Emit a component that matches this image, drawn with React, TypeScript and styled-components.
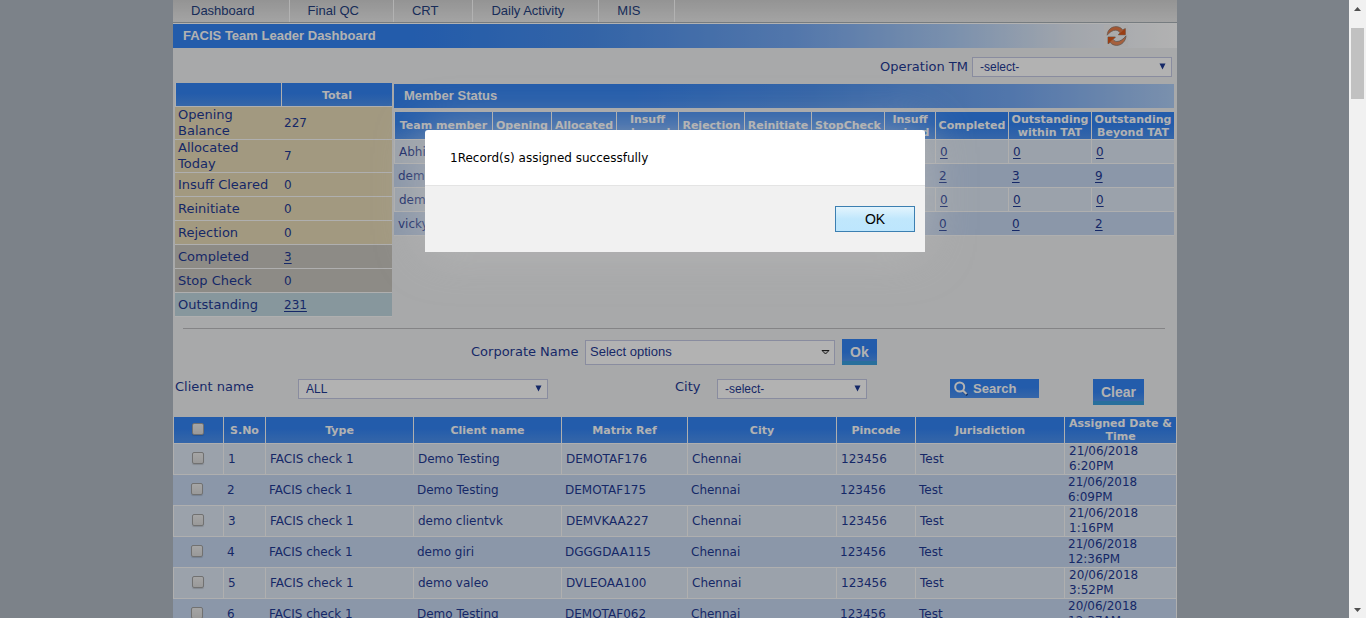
import React from "react";
import styled, { createGlobalStyle, css } from "styled-components";

const sans = `"Liberation Sans", Arial, sans-serif`;
const wide = `"DejaVu Sans", Verdana, sans-serif`;
const ink = "#1f3a94";
const line = "#fbfbfb";
const blueFill = "linear-gradient(#3384f5 0%, #3384f5 45%, #4d93f2 100%)";
const barFill =
  "linear-gradient(90deg, #3384f5 0, #3384f5 240px, #4a90f0 420px, #76aaf5 620px, #b0cff8 780px, #e8eef7 900px, #ffffff 1004px)";

const GlobalStyle = createGlobalStyle`
  *, *::before, *::after { box-sizing: border-box; }
  body { margin: 0; overflow: hidden; font-family: ${wide}; color: ${ink}; }
  h1, h2, p { margin: 0; }
`;

const Shell = styled.div`
  display: flex;
  height: 100vh;
  overflow: hidden;
`;

const Viewport = styled.div`
  position: relative;
  flex: 1;
  padding-left: 1px;
  overflow: hidden;
  background: #b2bbc4;
`;

const Page = styled.main`
  width: 100%;
  max-width: 1004px;
  min-height: 100vh;
  margin: 0 auto;
  background: #f1f2f4;
`;

const Nav = styled.nav`
  display: flex;
  height: 24px;
  background: linear-gradient(#d4d4d4, #ececec);
  border-bottom: 1px solid #fff;
  box-shadow: inset 0 -1px #aab2b8;
`;

const NavLink = styled.a`
  height: 22px;
  padding: 0 34px 0 18px;
  border-right: 1px solid #fff;
  font: 13px/22px ${sans};
  color: #24407f;
  text-decoration: none;
`;

const TitleBar = styled.header`
  display: flex;
  align-items: center;
  justify-content: space-between;
  height: 24px;
  padding: 0 49px 0 10px;
  background: ${barFill};
`;

const Title = styled.h1`
  font: bold 13px/24px ${sans};
  color: #fff;
`;

const RefreshButton = styled.button`
  display: flex;
  width: 24px;
  height: 22px;
  padding: 0;
  border: 0;
  background: #f4f4f5;
`;

const OperationRow = styled.div`
  display: flex;
  justify-content: flex-end;
  align-items: center;
  gap: 4px;
  padding: 9px 5px 6px;
  height: 35px;
`;

const Label = styled.label`
  font: 13px/16px ${wide};
  color: ${ink};
`;

const SelectWrap = styled.div<{ $width: number }>`
  position: relative;
  width: ${(p) => p.$width}px;
  height: 20px;

  svg {
    position: absolute;
    top: 6px;
    right: 6px;
    pointer-events: none;
  }
`;

const SelectBox = styled.select`
  display: block;
  width: 100%;
  height: 100%;
  padding: 0 20px 0 7px;
  border: 1px solid #c5c9e4;
  border-radius: 0;
  background: #fff;
  appearance: none;
  font: 12px/18px ${sans};
  color: ${ink};
`;

const Summary = styled.section`
  display: flex;
  align-items: flex-start;
  gap: 2px;
  padding: 0 3px 0 2px;
`;

const TotalsTable = styled.table`
  flex: none;
  width: 217px;
  table-layout: fixed;
  border-collapse: separate;
  border-spacing: 0;
  font-size: 12px;
`;

const TotalsHead = styled.th`
  height: 24px;
  padding: 2px 0 0;
  border-left: 1px solid ${line};
  border-bottom: 1px solid ${line};
  background: ${blueFill};
  font: bold 11px/13px ${wide};
  color: #fff;
`;

const tones = { tan: "#e9dbb8", grey: "#cbc7c0", teal: "#c2d8e1" };

const TotalsRow = styled.tr<{ $tone: keyof typeof tones }>`
  background: ${(p) => tones[p.$tone]};

  th,
  td {
    height: 24px;
    padding: 0 3px;
    border-bottom: 1px solid ${line};
    text-align: left;
  }
  th {
    padding-right: 4px;
    font: 13px/16px ${wide};
  }
`;

const CountLink = styled.a`
  color: inherit;
  text-decoration: underline;
  text-underline-offset: 2px;
`;

const MemberPanel = styled.div`
  flex: 1;
  min-width: 0;
  padding-top: 1px;
`;

const PanelTitle = styled.h2`
  margin-bottom: 4px;
  padding-left: 10px;
  background: ${barFill};
  font: bold 13px/24px ${sans};
  color: #fff;
`;

const GridTable = styled.table`
  width: 100%;
  table-layout: fixed;
  border-collapse: separate;
  border-spacing: 0;
  font: 12px/15px ${wide};
`;

const HeadCell = styled.th`
  height: 27px;
  padding: 0;
  border-left: 1px solid ${line};
  border-bottom: 1px solid ${line};
  background: ${blueFill};
  font: bold 11px/13px ${wide};
  color: #fff;
  text-align: center;
`;

const BodyRow = styled.tr<{ $alt: boolean; $height: number }>`
  background: ${(p) => (p.$alt ? "#c7d9f3" : "#dfe8f5")};

  td {
    height: ${(p) => p.$height}px;
    padding: 0 3px 0 4px;
    border-bottom: 1px solid ${line};
    ${(p) =>
      !p.$alt &&
      css`
        border-left: 1px solid ${line};
      `}
  }
`;

const MembersTable = styled(GridTable)`
  th {
    height: 28px;
  }
  tbody td {
    padding-top: 2px;
  }
`;

const RecordsTable = styled(GridTable)`
  border-right: 1px solid ${line};
`;

const CheckCell = styled.td`
  text-align: center;
`;

const Tick = styled.input`
  display: block;
  width: 12px;
  height: 12px;
  margin: 0 auto 2px 18px;
  border: 1px solid #a2a2a2;
  border-radius: 2px;
  background: linear-gradient(#ededed, #dcdcdc);
  box-shadow: 0 1px 1px rgba(0, 0, 0, 0.15);
  appearance: none;

  td > & {
    margin-left: 14px;
  }
`;

const Divider = styled.hr`
  height: 1px;
  margin: 11px 12px 10px 10px;
  border: 0;
  background: #bdbec0;
`;

const CorporateRow = styled.div`
  display: grid;
  grid-template-columns: 114px 250px auto;
  justify-content: start;
  align-items: center;
  height: 26px;
  padding-left: 298px;
`;

const MultiSelect = styled.button`
  display: flex;
  align-items: center;
  justify-content: space-between;
  width: 100%;
  height: 25px;
  padding: 0 4px;
  border: 1px solid #c5c9e4;
  background: #fff;
  font: 13px/16px ${sans};
  color: ${ink};
`;

const ActionButton = styled.button`
  height: 26px;
  padding: 0 8px;
  border: 0;
  background: linear-gradient(#3384f5 0%, #3384f5 50%, #4d93f2 84%, #3aa0e0 86%, #3aa0e0 100%);
  font: bold 14px/26px ${sans};
  color: #fff;
`;

const ApplySlot = styled.div`
  display: flex;
  padding-left: 7px;
`;

const SearchButton = styled.button`
  display: flex;
  align-items: center;
  gap: 5px;
  width: 89px;
  height: 19px;
  padding: 0 4px;
  border: 0;
  background: ${blueFill};
  font: bold 13px/19px ${sans};
  color: #fff;
`;

const FilterRow = styled.div`
  display: grid;
  grid-template-columns: 123px 377px 42px 233px 143px 1fr;
  align-items: start;
  padding: 14px 0 12px 2px;
`;

const ScrollTrack = styled.div`
  display: flex;
  flex-direction: column;
  align-items: center;
  flex: none;
  width: 17px;
  padding: 7px 0 6px;
  background: #f1f1f1;
`;

const ScrollThumb = styled.div`
  width: 13px;
  height: 71px;
  margin: 17px 0 auto;
  background: #c1c1c1;
`;

const Backdrop = styled.div`
  position: absolute;
  inset: 0;
  display: flex;
  justify-content: center;
  align-items: flex-start;
  padding: 130px 0 0 1px;
  background: rgba(0, 0, 0, 0.3);
`;

const Dialog = styled.div`
  width: 500px;
  border-radius: 3px 3px 0 0;
  background: #fff;
  box-shadow: 0 0 50px rgba(186, 186, 186, 0.7);
  overflow: hidden;
`;

const DialogText = styled.p`
  padding: 21px 25px 19px;
  font: 12px/15px ${wide};
  color: #000;
`;

const DialogFooter = styled.div`
  display: flex;
  justify-content: flex-end;
  padding: 20px 10px;
  border-top: 1px solid #e4e4e4;
  background: #f1f1f1;
`;

const OkButton = styled.button`
  width: 80px;
  height: 26px;
  border: 1px solid #3c7fb1;
  background: linear-gradient(#e3f4fd, #c0e7fc 50%, #bde6fd);
  font: 14px/22px ${sans};
  color: #000;
`;

const Select = ({ id, width, value }: { id: string; width: number; value: string }) => (
  <SelectWrap $width={width}>
    <SelectBox id={id} defaultValue={value}>
      <option>{value}</option>
    </SelectBox>
    <svg width="7" height="7" viewBox="0 0 7 7" aria-hidden="true">
      <path d="M0.500 0.5h6L3.500 6.500z" fill={ink} />
    </svg>
  </SelectWrap>
);

const RefreshIcon = () => (
  <svg width="24" height="22" viewBox="0 0 24 22" aria-hidden="true">
    <path
      d="M3.200 10.200C3.300 5 7.500 1.600 12 1.600c2.800 0 5 1.200 6.700 3.200L21.300 3.600v6.200h-7l1.700-2C14.900 6.200 13.500 5.200 11.800 5.200 8.500 5.200 5.500 7.200 3.200 10.200z"
      fill="#ea7a45"
      stroke="#8d8079"
      strokeWidth=".7"
    />
    <path
      d="M22 10.800c-.1 5.200-4.300 9.600-9.300 9.600-2.800 0-4.900-1.100-6.500-3L4 18.800v-6.800h7.400l-2.200 2.400c1 1.300 2.100 2.100 3.700 2.100 3.300 0 6.700-2.400 9.100-5.700z"
      fill="#ee8a58"
      stroke="#7d746f"
      strokeWidth=".7"
    />
    <path d="M21.300 3.600v6.200h-7z" fill="#dd5a1e" />
    <path d="M4 18.800v-6.800h7.400z" fill="#dd5a1e" />
  </svg>
);

const SearchIcon = () => (
  <svg width="14" height="15" viewBox="0 0 14 15" aria-hidden="true">
    <path d="M9.500 10.500l3.800 3.800" stroke="#1b4c96" strokeWidth="2.400" />
    <circle cx="5.700" cy="6" r="4.500" fill="none" stroke="#fff" strokeWidth="2" />
    <path d="M8.700 9.200l3.800 3.800" stroke="#fff" strokeWidth="2.200" />
  </svg>
);

const navItems = ["Dashboard", "Final QC", "CRT", "Daily Activity", "MIS"];

const totals: { label: string; value: number; tone: keyof typeof tones; link?: boolean }[] = [
  { label: "Opening Balance", value: 227, tone: "tan" },
  { label: "Allocated Today", value: 7, tone: "tan" },
  { label: "Insuff Cleared", value: 0, tone: "tan" },
  { label: "Reinitiate", value: 0, tone: "tan" },
  { label: "Rejection", value: 0, tone: "tan" },
  { label: "Completed", value: 3, tone: "grey", link: true },
  { label: "Stop Check", value: 0, tone: "grey" },
  { label: "Outstanding", value: 231, tone: "teal", link: true },
];

const memberColumns: [string, number][] = [
  ["Team member", 98],
  ["Opening", 59],
  ["Allocated", 65],
  ["Insuff cleared", 62],
  ["Rejection", 66],
  ["Reinitiate", 67],
  ["StopCheck", 73],
  ["Insuff raised", 51],
  ["Completed", 73],
  ["Outstanding within TAT", 83],
  ["Outstanding Beyond TAT", 83],
];

const emptyColumns = [1, 2, 3, 4, 5, 6, 7];

const members: [string, number[]][] = [
  ["Abhi", [0, 0, 0]],
  ["demo", [2, 3, 9]],
  ["demo", [0, 0, 0]],
  ["vicky", [0, 0, 2]],
];

const recordColumns: [string, number][] = [
  ["S.No", 42],
  ["Type", 148],
  ["Client name", 148],
  ["Matrix Ref", 126],
  ["City", 149],
  ["Pincode", 79],
  ["Jurisdiction", 149],
  ["Assigned Date & Time", 112],
];

const records = [
  ["Demo Testing", "DEMOTAF176", "21/06/2018", "6:20PM"],
  ["Demo Testing", "DEMOTAF175", "21/06/2018", "6:09PM"],
  ["demo clientvk", "DEMVKAA227", "21/06/2018", "1:16PM"],
  ["demo giri", "DGGGDAA115", "21/06/2018", "12:36PM"],
  ["demo valeo", "DVLEOAA100", "20/06/2018", "3:52PM"],
  ["Demo Testing", "DEMOTAF062", "20/06/2018", "12:37AM"],
];

export default function App() {
  return (
    <Shell>
      <GlobalStyle />
      <Viewport>
        <Page>
          <Nav>
            {navItems.map((item) => (
              <NavLink href="#" key={item}>
                {item}
              </NavLink>
            ))}
          </Nav>
          <TitleBar>
            <Title>FACIS Team Leader Dashboard</Title>
            <RefreshButton aria-label="Refresh">
              <RefreshIcon />
            </RefreshButton>
          </TitleBar>
          <OperationRow>
            <Label htmlFor="operation">Operation TM</Label>
            <Select id="operation" width={200} value="-select-" />
          </OperationRow>

          <Summary>
            <TotalsTable>
              <colgroup>
                <col style={{ width: 106 }} />
                <col />
              </colgroup>
              <thead>
                <tr>
                  <TotalsHead />
                  <TotalsHead>Total</TotalsHead>
                </tr>
              </thead>
              <tbody>
                {totals.map((t) => (
                  <TotalsRow key={t.label} $tone={t.tone}>
                    <th scope="row">{t.label}</th>
                    <td>{t.link ? <CountLink href="#">{t.value}</CountLink> : t.value}</td>
                  </TotalsRow>
                ))}
              </tbody>
            </TotalsTable>
            <MemberPanel>
              <PanelTitle>Member Status</PanelTitle>
              <MembersTable>
                <colgroup>
                  {memberColumns.map(([name, width]) => (
                    <col key={name} style={{ width }} />
                  ))}
                </colgroup>
                <thead>
                  <tr>
                    {memberColumns.map(([name]) => (
                      <HeadCell key={name}>{name}</HeadCell>
                    ))}
                  </tr>
                </thead>
                <tbody>
                  {members.map(([name, counts], row) => (
                    <BodyRow key={row} $alt={row % 2 === 1} $height={24}>
                      <td>{name}</td>
                      {emptyColumns.map((column) => (
                        <td key={column} />
                      ))}
                      {counts.map((count, i) => (
                        <td key={`count-${i}`}>
                          <CountLink href="#">{count}</CountLink>
                        </td>
                      ))}
                    </BodyRow>
                  ))}
                </tbody>
              </MembersTable>
            </MemberPanel>
          </Summary>

          <Divider />

          <CorporateRow>
            <Label htmlFor="corporate">Corporate Name</Label>
            <MultiSelect id="corporate">
              Select options
              <svg width="9" height="5" viewBox="0 0 9 5" aria-hidden="true">
                <path d="M1 .5h7L4.500 4z" fill="#ddd" stroke="#222" />
              </svg>
            </MultiSelect>
            <ApplySlot>
              <ActionButton>Ok</ActionButton>
            </ApplySlot>
          </CorporateRow>

          <FilterRow>
            <Label htmlFor="client">Client name</Label>
            <Select id="client" width={250} value="ALL" />
            <Label htmlFor="city">City</Label>
            <Select id="city" width={150} value="-select-" />
            <SearchButton>
              <SearchIcon />
              Search
            </SearchButton>
            <div>
              <ActionButton>Clear</ActionButton>
            </div>
          </FilterRow>

          <RecordsTable>
            <colgroup>
              <col style={{ width: 50 }} />
              {recordColumns.map(([name, width]) => (
                <col key={name} style={{ width }} />
              ))}
            </colgroup>
            <thead>
              <tr>
                <HeadCell>
                  <Tick type="checkbox" aria-label="Select all" />
                </HeadCell>
                {recordColumns.map(([name]) => (
                  <HeadCell key={name}>{name}</HeadCell>
                ))}
              </tr>
            </thead>
            <tbody>
              {records.map(([client, ref, date, time], i) => (
                <BodyRow key={ref} $alt={i % 2 === 1} $height={31}>
                  <CheckCell>
                    <Tick type="checkbox" aria-label={`Select record ${i + 1}`} />
                  </CheckCell>
                  <td>{i + 1}</td>
                  <td>FACIS check 1</td>
                  <td>{client}</td>
                  <td>{ref}</td>
                  <td>Chennai</td>
                  <td>123456</td>
                  <td>Test</td>
                  <td>
                    {date}
                    <br />
                    {time}
                  </td>
                </BodyRow>
              ))}
            </tbody>
          </RecordsTable>
        </Page>

        <Backdrop>
          <Dialog role="alertdialog" aria-describedby="message">
            <DialogText id="message">1Record(s) assigned successfully</DialogText>
            <DialogFooter>
              <OkButton>OK</OkButton>
            </DialogFooter>
          </Dialog>
        </Backdrop>
      </Viewport>
      <ScrollTrack>
        <svg width="7" height="4" viewBox="0 0 7 4" aria-hidden="true">
          <path d="M0 4h7L3.500 0z" fill="#505050" />
        </svg>
        <ScrollThumb />
        <svg width="7" height="4" viewBox="0 0 7 4" aria-hidden="true">
          <path d="M0 0h7L3.500 4z" fill="#505050" />
        </svg>
      </ScrollTrack>
    </Shell>
  );
}
